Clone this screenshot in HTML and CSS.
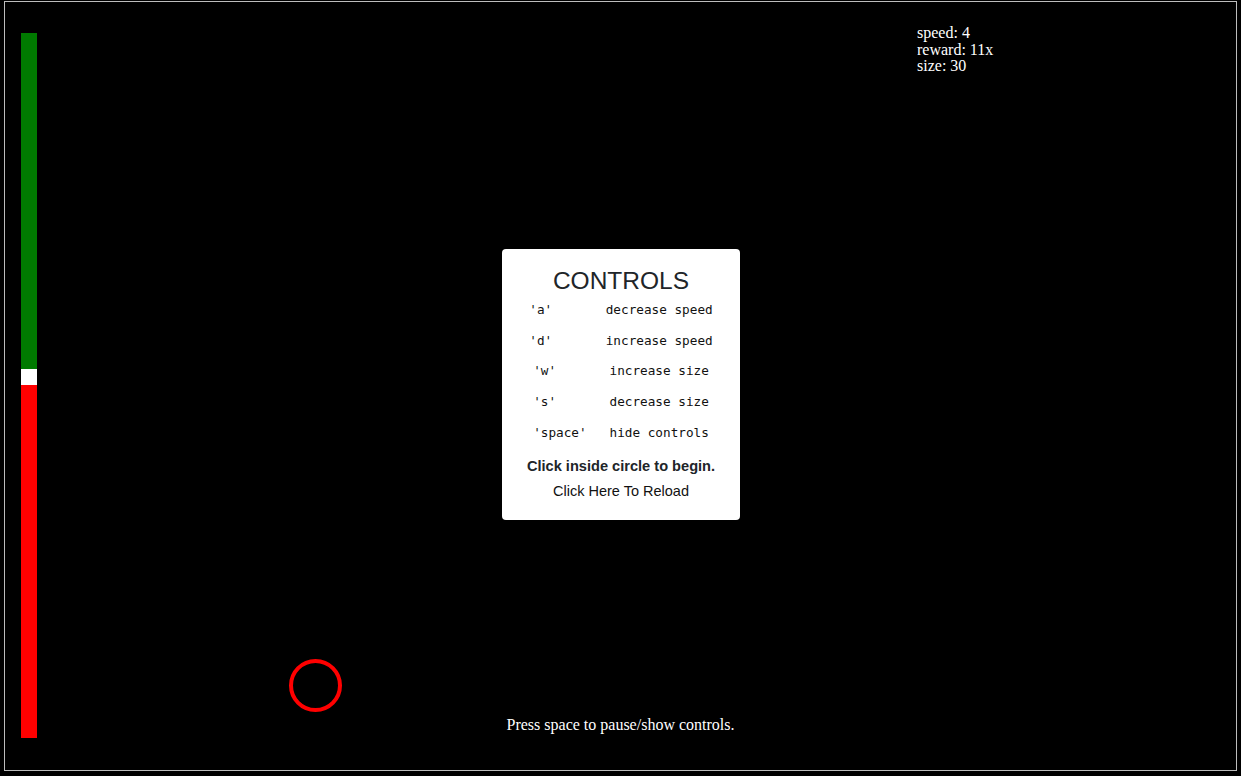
FILE: index.html
```html
<!DOCTYPE html>
<html>
<head>
<meta charset="utf-8">
<link rel="stylesheet" href="styles.css">
</head>
<body>
<div class="stage">
  <div class="meter">
    <div class="meter-good"></div>
    <div class="meter-mark"></div>
    <div class="meter-bad"></div>
  </div>
  <div class="hud">
    <div>speed: 4</div>
    <div>reward: 11x</div>
    <div>size: 30</div>
  </div>
  <div class="target"></div>
  <div class="hint">Press space to pause/show controls.</div>
  <div class="modal">
    <h1 class="modal-title">CONTROLS</h1>
    <div class="keys">
      <div class="key-row">'a'       decrease speed</div>
      <div class="key-row">'d'       increase speed</div>
      <div class="key-row">'w'       increase size</div>
      <div class="key-row">'s'       decrease size</div>
      <div class="key-row">'space'   hide controls</div>
    </div>
    <p class="modal-start">Click inside circle to begin.</p>
    <p class="modal-reload">Click Here To Reload</p>
  </div>
</div>
</body>
</html>
```

FILE: styles.css
```css
html, body {
  margin: 0;
  padding: 0;
  background: #000;
}

.stage {
  position: relative;
  box-sizing: border-box;
  margin: 1px 0 0 4px;
  width: 1233px;
  height: 770px;
  border: 1px solid #bdbdbd;
  background: #000;
  padding: 31px 0 0 16px;
  font-family: "Liberation Serif", "Times New Roman", serif;
  color: #fff;
}

.meter {
  display: flex;
  flex-direction: column;
  width: 16px;
  height: 705px;
}

.meter-good {
  height: 336px;
  background: #007a00;
}

.meter-mark {
  height: 16px;
  background: #fff;
}

.meter-bad {
  flex: 1;
  background: #ff0000;
}

.hud {
  position: absolute;
  left: 912px;
  top: 23px;
  font-size: 16px;
  line-height: 16.5px;
}

.target {
  position: absolute;
  left: 284px;
  top: 657px;
  box-sizing: border-box;
  width: 53px;
  height: 53px;
  border: 4px solid #ff0000;
  border-radius: 50%;
}

.hint {
  position: absolute;
  left: 0;
  right: 0;
  top: 714px;
  text-align: center;
  font-size: 16px;
  line-height: 18px;
}

.modal {
  position: absolute;
  left: 497px;
  top: 247px;
  box-sizing: border-box;
  width: 238px;
  padding: 18px 0 19px;
  background: #fff;
  border-radius: 4px;
  text-align: center;
  color: #212529;
  font-family: "Liberation Sans", Arial, sans-serif;
}

.modal-title {
  margin: 0;
  font-size: 24.5px;
  font-weight: 400;
  line-height: 27px;
}

.keys {
  display: flex;
  flex-direction: column;
  margin-top: 1px;
}

.key-row {
  white-space: pre;
  font-family: "DejaVu Sans Mono", "Liberation Mono", monospace;
  font-size: 12.7px;
  line-height: 30.7px;
  color: #111;
}

.modal-start {
  margin: 7.6px 0 0;
  font-size: 14.6px;
  font-weight: 700;
  line-height: 20px;
}

.modal-reload {
  margin: 5px 0 0;
  font-size: 14.5px;
  line-height: 20px;
  color: #111;
}
```
